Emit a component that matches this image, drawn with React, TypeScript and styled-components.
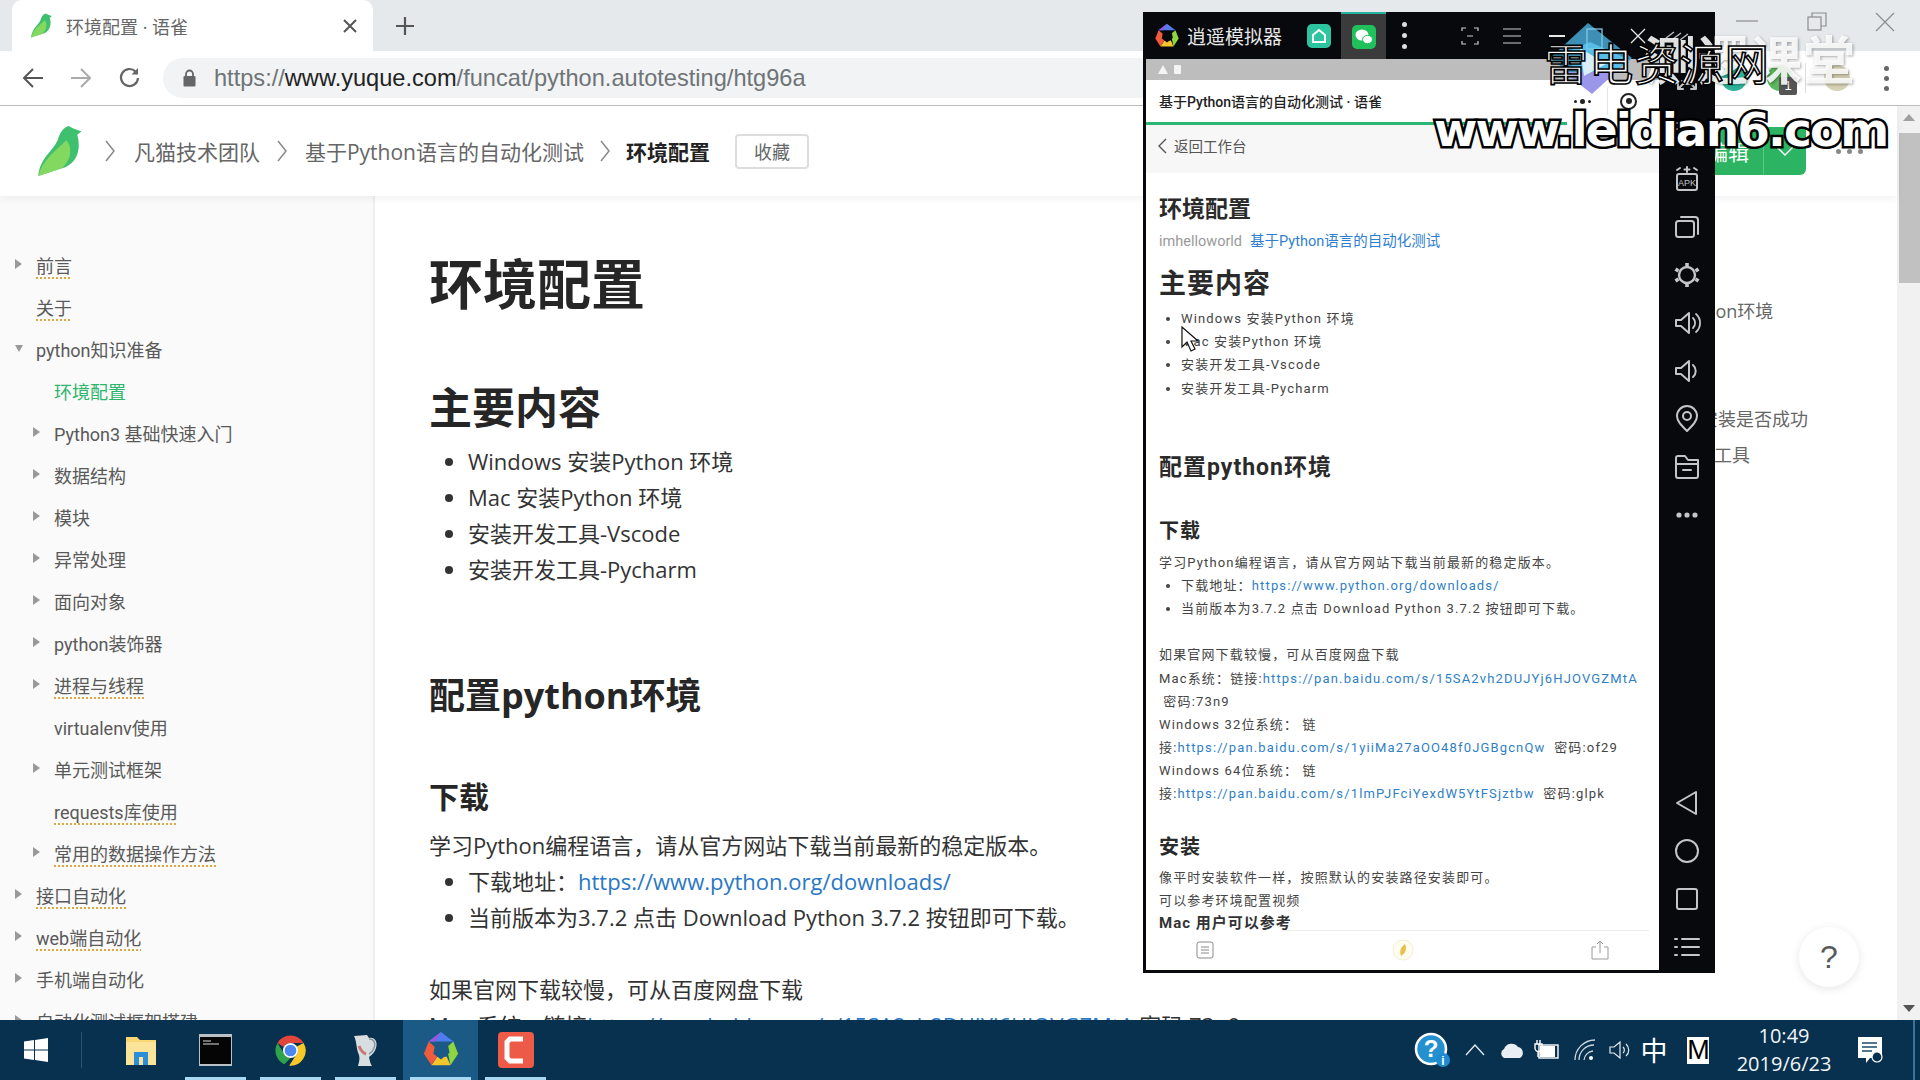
import React from "react";
import styled, { createGlobalStyle } from "styled-components";

const sans = `"Open Sans", "Noto Sans CJK SC", sans-serif`;
const navFont = `Roboto, "Noto Sans CJK SC", sans-serif`;
const phoneFont = `Roboto, "Noto Sans CJK SC", sans-serif`;

const Global = createGlobalStyle`
  html, body { margin: 0; padding: 0; width: 1920px; height: 1080px; overflow: hidden; background: #fff; }
  * { box-sizing: border-box; }
  ul { list-style: disc; }
`;

const Screen = styled.div`
  position: relative; width: 1920px; height: 1080px; overflow: hidden;
  display: flex; flex-direction: column; font-family: ${sans}; color: #333;
`;

/* ---------- browser chrome ---------- */
const TabStrip = styled.div`
  height: 51px; flex: none; background: #e6e9ec; display: flex; align-items: stretch; padding-left: 12px;
`;
const Tab = styled.div`
  width: 361px; background: #fff; border-radius: 10px 10px 0 0; display: flex; align-items: center;
  padding: 0 16px 0 18px; gap: 12px; font-size: 18px; color: #666;
`;
const TabTitle = styled.span`flex: 1; white-space: nowrap;`;
const NewTab = styled.div`
  width: 64px; display: flex; align-items: center; justify-content: center; color: #555;
`;
const WindowControls = styled.div`
  margin-left: auto; display: flex; align-items: flex-start; gap: 48px; padding: 12px 25px 0 0; color: #8a8d90;
`;
const Toolbar = styled.div`
  height: 55px; flex: none; background: #fff; border-bottom: 1px solid #bdbdbd; display: flex; align-items: center;
  padding: 0 3px 0 22px;
`;
const NavIcon = styled.div<{ $w: number }>`
  width: ${(p) => p.$w}px; flex: none; display: flex; align-items: center; color: #666;
`;
const Omnibox = styled.div`
  flex: 1; height: 40px; border-radius: 20px; background: #f1f3f4; display: flex; align-items: center;
  padding-left: 20px; gap: 18px; font-family: "Liberation Sans", sans-serif; font-size: 23.6px; color: #6f7477;
`;
const UrlHost = styled.span`color: #222;`;
const ToolbarRight = styled.div`
  flex: none; width: 230px; padding-left: 34px; display: flex; align-items: center; gap: 0;
`;
const ExtIcon = styled.div<{ $c: string }>`
  position: relative; width: 26px; height: 26px; border-radius: 50%; background: ${(p) => p.$c}; margin-right: 20px; flex: none;
`;
const ExtBadge = styled.span`
  position: absolute; left: 12px; top: 12px; width: 18px; height: 18px; background: #555; color: #fff; border-radius: 2px;
  font-size: 13px; line-height: 18px; text-align: center; font-family: "Liberation Sans", sans-serif;
`;
const ToolbarDivider = styled.div`width: 1px; height: 30px; background: #ddd; margin: 0 18px 0 -8px; flex: none;`;
const MenuDots = styled.div`
  display: flex; flex-direction: column; gap: 5px; margin-left: 14px; flex: none;
  span { width: 5px; height: 5px; border-radius: 50%; background: #666; }
`;

/* ---------- page ---------- */
const PageRow = styled.div`flex: 1; min-height: 0; display: flex; position: relative;`;
const Page = styled.div`flex: 1; min-width: 0; display: flex; flex-direction: column;`;
const PageHeader = styled.header`
  height: 90px; flex: none; display: flex; align-items: center; padding: 0 34px 0 36px; background: #fff;
  box-shadow: 0 3px 8px rgba(0, 0, 0, 0.05); position: relative; z-index: 1;
`;
const Crumb = styled.span<{ $strong?: boolean }>`
  font-size: 21px; white-space: nowrap; color: ${(p) => (p.$strong ? "#222" : "#666")}; font-weight: ${(p) => (p.$strong ? 700 : 400)};
`;
const CrumbSep = styled.div<{ $w: number }>`
  width: ${(p) => p.$w}px; flex: none; display: flex; justify-content: center; color: #888;
`;
const Collect = styled.button`
  margin-left: 25px; width: 74px; height: 35px; border: 2px solid #ddd; border-radius: 4px; background: #fff;
  font: 18px ${sans}; color: #666; padding: 0;
`;
const EditButton = styled.div`
  margin-left: auto; width: 145px; height: 48px; background: #2cb462; border-radius: 0 0 6px 0; color: #fff;
  display: flex; align-items: center; font-size: 21px; justify-content: flex-end;
`;
const EditLabel = styled.span`padding-right: 14px;`;
const EditCaret = styled.div`
  width: 43px; height: 100%; border-left: 1px solid #5cc888; display: flex; align-items: center; justify-content: center;
`;
const HeaderMore = styled.div`
  display: flex; gap: 6px; margin-left: 30px;
  span { width: 5px; height: 5px; border-radius: 50%; background: #888; }
`;
const PageBody = styled.div`flex: 1; min-height: 0; display: flex; overflow: hidden;`;
const Sidebar = styled.nav`
  width: 375px; flex: none; background: #fafafa; border-right: 2px solid #eee; padding-top: 48px; overflow: hidden; font-family: ${navFont};
`;
const NavItem = styled.div<{ $level: number }>`
  height: 42px; display: flex; align-items: center; padding-left: ${(p) => 15 + p.$level * 18}px; font-size: 18px; color: #595959; white-space: nowrap;
`;
const NavArrow = styled.span<{ $open?: boolean; $hidden?: boolean }>`
  width: 21px; flex: none; display: block; height: 0; position: relative;
  &::before {
    content: ""; position: absolute; left: 0; top: -6px; border-style: solid;
    display: ${(p) => (p.$hidden ? "none" : "block")};
    border-width: ${(p) => (p.$open ? "7px 4px 0 4px" : "5px 0 5px 7px")};
    margin-top: ${(p) => (p.$open ? "2px" : "0")};
    border-color: ${(p) => (p.$open ? "#999 transparent transparent transparent" : "transparent transparent transparent #999")};
  }
`;
const NavLabel = styled.span<{ $linked?: boolean; $active?: boolean }>`
  color: ${(p) => (p.$active ? "#2db56c" : "inherit")};
  ${(p) =>
    p.$linked
      ? "text-decoration: underline dotted #e0a83c; text-decoration-thickness: 2px; text-underline-offset: 4px; text-decoration-skip-ink: none;"
      : ""}
`;
const Article = styled.main`
  flex: 1; min-width: 0; padding: 53px 0 0 54px; color: #333; overflow: hidden; font-size: 22px;
`;
const H1 = styled.h1`margin: 0; font-size: 54px; line-height: 70px; color: #262626; font-weight: 700;`;
const H2 = styled.h2<{ $size: number; $top: number; $lh: number }>`
  margin: ${(p) => p.$top}px 0 0; font-size: ${(p) => p.$size}px; line-height: ${(p) => p.$lh}px; color: #262626; font-weight: 700; white-space: nowrap;
`;
const List = styled.ul<{ $top: number }>`
  margin: ${(p) => p.$top}px 0 0; padding: 0 0 0 39px;
`;
const Li = styled.li`line-height: 36px; white-space: nowrap;`;
const Para = styled.p<{ $top: number }>`
  margin: ${(p) => p.$top}px 0 0; line-height: 36px; white-space: nowrap;
`;
const DocLink = styled.a`color: #2a78c4; text-decoration: none;`;
const Toc = styled.aside`
  width: 255px; flex: none; padding-top: 97px; font-size: 18px; color: #666;
`;
const TocItem = styled.div<{ $indent?: boolean }>`
  height: 36px; line-height: 36px; white-space: nowrap; padding-left: ${(p) => (p.$indent ? 22 : 0)}px;
`;
const Scrollbar = styled.div`
  width: 23px; flex: none; background: #f1f1f1; display: flex; flex-direction: column; align-items: center; padding: 8px 0 8px 1px;
`;
const ScrollThumb = styled.div`width: 21px; height: 150px; background: #c1c1c1; margin-top: 12px;`;
const ScrollArrow = styled.div<{ $down?: boolean }>`
  width: 0; height: 0; border-left: 6px solid transparent; border-right: 6px solid transparent;
  ${(p) => (p.$down ? "border-top: 7px solid #555; margin-top: auto;" : "border-bottom: 7px solid #a0a0a0;")}
`;
const HelpFab = styled.div`
  position: absolute; left: 1799px; top: 821px; width: 60px; height: 60px; border-radius: 50%; background: #fff;
  box-shadow: 0 2px 10px rgba(0, 0, 0, 0.1); display: flex; align-items: center; justify-content: center;
  font: 32px "Liberation Sans", sans-serif; color: #595959;
`;

/* ---------- emulator window ---------- */
const Emulator = styled.section`
  position: absolute; left: 1143px; top: 12px; width: 572px; height: 961px; background: #07090c; display: flex; flex-direction: column; z-index: 2;
`;
const EmuTitle = styled.div`
  height: 47px; flex: none; display: flex; align-items: stretch; color: #fff; padding-left: 11px;
`;
const EmuBrand = styled.div`
  display: flex; align-items: center; gap: 7px; font-size: 19px; width: 177px; white-space: nowrap; color: #e8e8e8;
`;
const EmuAppTab = styled.div<{ $active?: boolean }>`
  width: 45px; flex: none; display: flex; align-items: center; justify-content: center; margin-left: ${(p) => (p.$active ? 0 : -35)}px;
  ${(p) => (p.$active ? "background: #3b3b3b; border-top: 2px solid #25b39e;" : "")}
`;
const EmuAppIcon = styled.div<{ $c: string; $round?: boolean }>`
  width: 24px; height: 24px; border-radius: 5px; background: ${(p) => p.$c}; display: flex; align-items: center; justify-content: center;
`;
const EmuDots = styled.div`
  display: flex; flex-direction: column; gap: 6px; align-items: center; justify-content: center; width: 36px;
  span { width: 5px; height: 5px; border-radius: 50%; background: #ddd; }
`;
const EmuControls = styled.div`
  display: flex; align-items: center; margin-left: 39px; color: #cfcfcf; gap: 21px;
`;
const EmuClose = styled.div`margin-left: 60px; display: flex; align-items: center;`;
const EmuCollapse = styled.div`margin-left: 18px; display: flex; align-items: center; color: #bbb;`;
const EmuBody = styled.div`flex: 1; min-height: 0; display: flex;`;
const Phone = styled.div`
  width: 516px; flex: none; background: #fff; border-left: 3px solid #07090c; border-bottom: 3px solid #07090c;
  display: flex; flex-direction: column; overflow: hidden; font-family: ${phoneFont};
`;
const StatusBar = styled.div`
  height: 21px; flex: none; background: #bdbdbd; display: flex; align-items: center; gap: 6px; padding-left: 12px;
`;
const StatusMark = styled.span<{ $warn?: boolean }>`
  width: 10px; height: 9px; background: #f4f4f4; flex: none;
  ${(p) => (p.$warn ? "clip-path: polygon(50% 0, 100% 100%, 0 100%);" : "width: 7px; border-radius: 1px;")}
`;
const AppBar = styled.div`
  height: 42px; flex: none; display: flex; align-items: center; padding: 0 22px 0 13px; font-size: 14px; color: #222; font-weight: 500; white-space: nowrap;
`;
const Capsule = styled.div`
  margin-left: auto; display: flex; align-items: center; height: 28px; color: #222;
`;
const CapsuleDots = styled.div`
  display: flex; gap: 3px; align-items: center; padding-right: 16px; height: 100%; border-right: 1px solid #e6e6e6;
  span { width: 3px; height: 3px; border-radius: 50%; background: #222; }
  span:nth-child(2) { width: 5px; height: 5px; }
`;
const CapsuleTarget = styled.div`
  margin-left: 12px; width: 17px; height: 17px; border: 2px solid #222; border-radius: 50%; display: flex; align-items: center; justify-content: center;
  &::after { content: ""; width: 6px; height: 6px; background: #222; border-radius: 50%; }
`;
const Progress = styled.div`height: 3px; flex: none; width: 82%; background: #2bb673;`;
const BackRow = styled.div`
  height: 48px; flex: none; background: #f7f7f7; display: flex; align-items: center; padding: 0 0 7px 12px; gap: 7px; font-size: 14.5px; color: #555;
`;
const PhoneDoc = styled.div`
  flex: 1; min-height: 0; overflow: hidden; padding: 22px 0 0 13px; font-size: 13px; color: #444; letter-spacing: 1.15px;
`;
const PhH1 = styled.div`font-size: 23px; font-weight: 700; line-height: 30px; color: #2a2a2a; letter-spacing: 0;`;
const PhMeta = styled.div`
  margin-top: 5px; font-size: 14.5px; line-height: 24px; color: #999; letter-spacing: 0; display: flex; gap: 8px; white-space: nowrap;
`;
const PhMetaLink = styled.span`color: #2f7fd1;`;
const PhH2 = styled.div<{ $size: number; $top: number; $lh: number }>`
  margin-top: ${(p) => p.$top}px; font-size: ${(p) => p.$size}px; line-height: ${(p) => p.$lh}px; font-weight: 700; color: #2a2a2a; letter-spacing: 1px; white-space: nowrap;
`;
const PhList = styled.ul<{ $top: number }>`margin: ${(p) => p.$top}px 0 0; padding: 0 0 0 22px;`;
const PhLine = styled.div`height: 23.2px; line-height: 23.2px; white-space: nowrap;`;
const PhLi = styled.li`height: 23.2px; line-height: 23.2px; white-space: nowrap;`;
const PhP = styled.div<{ $top?: number }>`
  margin-top: ${(p) => p.$top ?? 0}px; height: 23.2px; line-height: 23.2px; white-space: nowrap;
`;
const PhLink = styled.span`color: #2f7fc6;`;
const PhBold = styled.div`height: 23px; line-height: 23px; font-size: 15px; font-weight: 700; color: #333; letter-spacing: 1px; white-space: nowrap;`;
const PhoneTabBar = styled.div`
  height: 40px; flex: none; background: #fff; display: flex; align-items: center; justify-content: space-between;
  padding: 0 50px; position: relative;
  &::before { content: ""; position: absolute; top: 0; left: 135px; right: 10px; height: 1px; background: #eee; }
`;
const SideRail = styled.div`
  flex: 1; display: flex; flex-direction: column; align-items: center; padding: 0 0 2px; color: #c3c5c7;
`;
const RailIcon = styled.div`height: 48px; flex: none; display: flex; align-items: center; justify-content: center;`;
const RailSpacer = styled.div`flex: 1;`;

/* ---------- overlays ---------- */
const Cursor = styled.svg`position: absolute; left: 1181px; top: 326px; z-index: 4;`;
const BrandDiamond = styled.svg`position: absolute; left: 1550px; top: 20px; z-index: 3;`;
const FaintBrand = styled.div`
  position: absolute; left: 1644px; top: 28px; z-index: 3; font-size: 52px; line-height: 64px; font-weight: 700; letter-spacing: 1px;
  color: rgba(255, 255, 255, 0.88); text-shadow: 1px 1px 3px rgba(0, 0, 0, 0.35); white-space: nowrap;
`;
const StampCn = styled.div`
  position: absolute; left: 1544px; top: 36px; z-index: 5; font-size: 44px; line-height: 56px; white-space: nowrap;
  color: #fff; -webkit-text-stroke: 1.6px #000; letter-spacing: 1.2px;
`;
const StampUrl = styled.div`
  position: absolute; left: 1434px; top: 102px; z-index: 5; font: 700 47px/56px "DejaVu Sans", sans-serif; white-space: nowrap;
  color: #fff; -webkit-text-stroke: 5px #000; paint-order: stroke fill; letter-spacing: -1.9px;
`;

/* ---------- taskbar ---------- */
const Taskbar = styled.footer`
  height: 60px; flex: none; background: #08304f; display: flex; align-items: stretch; color: #fff; position: relative; z-index: 6;
`;
const StartArea = styled.div`
  width: 82px; flex: none; display: flex; align-items: center; padding-left: 24px; border-right: 1px solid #2a5272; margin: 12px 0 0; height: 36px;
`;
const TaskApps = styled.div`display: flex; margin-left: 21px;`;
const TaskButton = styled.div<{ $active?: boolean; $running?: boolean }>`
  position: relative; width: 75px; display: flex; align-items: center; justify-content: center;
  background: ${(p) => (p.$active ? "#1a5a85" : "transparent")};
  &::after {
    content: ""; position: absolute; left: 7px; right: 7px; bottom: 0; height: 3px;
    background: ${(p) => (p.$running ? "#a9d9f2" : "transparent")};
  }
`;
const Tray = styled.div`margin: 0 5px 0 auto; display: flex; align-items: center; padding-right: 17px; border-right: 2px solid #3d7399;`;
const TraySlot = styled.div<{ $w: number }>`
  width: ${(p) => p.$w}px; flex: none; display: flex; align-items: center; justify-content: center;
`;
const ImeText = styled.span`font-size: 27px; line-height: 1; font-weight: 400;`;
const ImeBox = styled.span`
  width: 22px; height: 27px; background: #fff; color: #000; font: 27px/27px "Liberation Sans", sans-serif; display: block; text-align: center; overflow: hidden; letter-spacing: -1px;
`;
const Clock = styled.div`
  width: 118px; flex: none; text-align: center; font: 20px/28px "Open Sans", sans-serif; color: #f2f6f9; white-space: nowrap;
`;

/* ---------- drawings ---------- */
const Bird = ({ s }: { s: number }) => (
  <svg width={s * 0.96} height={s} viewBox="0 0 46 48">
    <path d="M30 1 L34 3 L42 6 L38 9 C42 22 38 36 24 40 L2 47 C4 30 14 26 20 14 C22 8 24 3 30 1Z" fill="#3fc06f" />
    <path d="M28 14 C33 20 34 30 24 40 L2 47 C6 32 18 24 28 14Z" fill="#8fdc5e" opacity="0.85" />
  </svg>
);
const Nox = ({ s, center = "#08304f" }: { s: number; center?: string }) => (
  <svg width={s} height={s} viewBox="0 0 40 40">
    <polygon points="20,1 33,11 14,11 7,11" fill="#4f7cf0" />
    <polygon points="20,1 7,11 14,11" fill="#9a55e0" />
    <polygon points="33,11 38,24 30,36 26,17" fill="#8ed63f" />
    <polygon points="30,36 10,36 16,27 26,27" fill="#f5c52d" />
    <polygon points="10,36 2,24 7,11 14,17 16,27" fill="#ef5b3c" />
    <polygon points="14,13 27,13 29,23 20,30 12,24" fill={center} />
  </svg>
);
const Chevron = ({ h = 22, w = 10 }: { h?: number; w?: number }) => (
  <svg width={w} height={h} viewBox="0 0 10 22" fill="none" stroke="currentColor" strokeWidth="1.5"><path d="M1 1 L9 11 L1 21" /></svg>
);

const navItems: { t: string; l: number; arrow?: boolean; open?: boolean; link?: boolean; active?: boolean }[] = [
  { t: "前言", l: 0, arrow: true, link: true },
  { t: "关于", l: 0, link: true },
  { t: "python知识准备", l: 0, arrow: true, open: true },
  { t: "环境配置", l: 1, active: true },
  { t: "Python3 基础快速入门", l: 1, arrow: true },
  { t: "数据结构", l: 1, arrow: true },
  { t: "模块", l: 1, arrow: true },
  { t: "异常处理", l: 1, arrow: true },
  { t: "面向对象", l: 1, arrow: true },
  { t: "python装饰器", l: 1, arrow: true },
  { t: "进程与线程", l: 1, arrow: true, link: true },
  { t: "virtualenv使用", l: 1 },
  { t: "单元测试框架", l: 1, arrow: true },
  { t: "requests库使用", l: 1, link: true },
  { t: "常用的数据操作方法", l: 1, arrow: true, link: true },
  { t: "接口自动化", l: 0, arrow: true, link: true },
  { t: "web端自动化", l: 0, arrow: true, link: true },
  { t: "手机端自动化", l: 0, arrow: true },
  { t: "自动化测试框架搭建", l: 0, arrow: true },
];

const rail = (d: React.ReactNode) => (
  <RailIcon>
    <svg width="28" height="28" viewBox="0 0 28 28" fill="none" stroke="currentColor" strokeWidth="2" strokeLinejoin="round" strokeLinecap="round">{d}</svg>
  </RailIcon>
);

export default function App() {
  return (
    <Screen>
      <Global />
      <TabStrip>
        <Tab>
          <Bird s={25} />
          <TabTitle>环境配置 · 语雀</TabTitle>
          <svg width="14" height="14" viewBox="0 0 14 14" stroke="#555" strokeWidth="2"><path d="M1 1 L13 13 M13 1 L1 13" /></svg>
        </Tab>
        <NewTab>
          <svg width="20" height="20" viewBox="0 0 20 20" stroke="currentColor" strokeWidth="2.2"><path d="M10 1 V19 M1 10 H19" /></svg>
        </NewTab>
        <WindowControls>
          <svg width="24" height="20" viewBox="0 0 24 20" stroke="currentColor" strokeWidth="1.2"><path d="M1 9 H23" /></svg>
          <svg width="20" height="20" viewBox="0 0 20 20" fill="none" stroke="currentColor" strokeWidth="1.2"><rect x="1" y="5" width="13" height="13" /><path d="M5 5 V1 H19 V14 H14" /></svg>
          <svg width="20" height="20" viewBox="0 0 20 20" stroke="currentColor" strokeWidth="1.2"><path d="M1 1 L19 19 M19 1 L1 19" /></svg>
        </WindowControls>
      </TabStrip>
      <Toolbar>
        <NavIcon $w={48}>
          <svg width="22" height="22" viewBox="0 0 22 22" fill="none" stroke="#555" strokeWidth="2"><path d="M21 11 H3 M11 2 L2 11 L11 20" /></svg>
        </NavIcon>
        <NavIcon $w={48}>
          <svg width="22" height="22" viewBox="0 0 22 22" fill="none" stroke="#aaa" strokeWidth="2"><path d="M1 11 H19 M11 2 L20 11 L11 20" /></svg>
        </NavIcon>
        <NavIcon $w={45}>
          <svg width="24" height="24" viewBox="0 0 24 24" fill="none" stroke="#666" strokeWidth="2.2"><path d="M20 12 A8.5 8.5 0 1 1 17.5 5.5" /><path d="M20 2 V8.5 H13.5 Z" fill="#666" stroke="none" /></svg>
        </NavIcon>
        <Omnibox>
          <svg width="13" height="18" viewBox="0 0 13 18"><path d="M3 8 V5 A3.5 3.5 0 0 1 10 5 V8" fill="none" stroke="#666" strokeWidth="1.8" /><rect x="0.5" y="7" width="12" height="10.5" rx="1" fill="#666" /></svg>
          <span>https://<UrlHost>www.yuque.com</UrlHost>/funcat/python.autotesting/htg96a</span>
        </Omnibox>
        <ToolbarRight>
          <ExtIcon $c="#2eb39a" />
          <ExtIcon $c="#5cb85c"><ExtBadge>1</ExtBadge></ExtIcon>
          <ToolbarDivider />
          <ExtIcon $c="#d6d2b4" />
          <MenuDots><span /><span /><span /></MenuDots>
        </ToolbarRight>
      </Toolbar>

      <PageRow>
        <Page>
          <PageHeader>
            <Bird s={52} />
            <CrumbSep $w={48}><Chevron /></CrumbSep>
            <Crumb>凡猫技术团队</Crumb>
            <CrumbSep $w={45}><Chevron /></CrumbSep>
            <Crumb>基于Python语言的自动化测试</Crumb>
            <CrumbSep $w={42}><Chevron /></CrumbSep>
            <Crumb $strong>环境配置</Crumb>
            <Collect>收藏</Collect>
            <EditButton>
              <EditLabel>编辑</EditLabel>
              <EditCaret>
                <svg width="18" height="10" viewBox="0 0 18 10" fill="none" stroke="#fff" strokeWidth="1.4"><path d="M1 1 L9 9 L17 1" /></svg>
              </EditCaret>
            </EditButton>
            <HeaderMore><span /><span /><span /></HeaderMore>
          </PageHeader>
          <PageBody>
            <Sidebar>
              {navItems.map((n) => (
                <NavItem key={n.t} $level={n.l}>
                  <NavArrow $open={n.open} $hidden={!n.arrow} />
                  <NavLabel $linked={n.link} $active={n.active}>{n.t}</NavLabel>
                </NavItem>
              ))}
            </Sidebar>
            <Article>
              <H1>环境配置</H1>
              <H2 $size={43} $top={59} $lh={60}>主要内容</H2>
              <List $top={5}>
                <Li>Windows 安装Python 环境</Li>
                <Li>Mac 安装Python 环境</Li>
                <Li>安装开发工具-Vscode</Li>
                <Li>安装开发工具-Pycharm</Li>
              </List>
              <H2 $size={36} $top={84} $lh={50}>配置python环境</H2>
              <H2 $size={30} $top={56} $lh={40}>下载</H2>
              <Para $top={10}>学习Python编程语言，请从官方网站下载当前最新的稳定版本。</Para>
              <List $top={0}>
                <Li>下载地址：<DocLink>https://www.python.org/downloads/</DocLink></Li>
                <Li>当前版本为3.7.2 点击 Download Python 3.7.2 按钮即可下载。</Li>
              </List>
              <Para $top={36}>如果官网下载较慢，可从百度网盘下载</Para>
              <Para $top={0}>Mac 系统：链接<DocLink>https://pan.baidu.com/s/15SA2vh2DUJYj6HJOVGZMtA</DocLink> 密码:73n9</Para>
            </Article>
            <Toc>
              <TocItem>配置python环境</TocItem>
              <TocItem $indent>下载</TocItem>
              <TocItem $indent>安装</TocItem>
              <TocItem $indent>验证安装是否成功</TocItem>
              <TocItem>安装开发工具</TocItem>
            </Toc>
          </PageBody>
        </Page>
        <Scrollbar>
          <ScrollArrow />
          <ScrollThumb />
          <ScrollArrow $down />
        </Scrollbar>
        <HelpFab>?</HelpFab>
      </PageRow>

      <Taskbar>
        <StartArea>
          <svg width="24" height="24" viewBox="0 0 24 24" fill="#fff"><polygon points="0,3.5 10,2 10,11.4 0,11.4" /><polygon points="11,1.9 24,0 24,11.4 11,11.4" /><polygon points="0,12.6 10,12.6 10,22 0,20.5" /><polygon points="11,12.6 24,12.6 24,24 11,22.1" /></svg>
        </StartArea>
        <TaskApps>
          <TaskButton>
            <svg width="32" height="32" viewBox="0 0 32 32"><path d="M1 3 H12 L15 6 H31 V31 H1Z" fill="#f7d774" /><path d="M1 8 H31 V31 H1Z" fill="#fbe49a" /><path d="M9 31 V18 H23 V31 H18 V23 H14 V31Z" fill="#2a8fd8" /></svg>
          </TaskButton>
          <TaskButton $running>
            <svg width="33" height="32" viewBox="0 0 33 32"><rect width="33" height="32" fill="#b9c0c6" /><rect x="1" y="3" width="31" height="27" fill="#050505" /><path d="M4 7 H12 M4 10 H20" stroke="#ddd" strokeWidth="1.2" /></svg>
          </TaskButton>
          <TaskButton $running>
            <svg width="33" height="33" viewBox="0 0 48 48"><path d="M24 2 A22 22 0 0 1 43 13 H24 A11 11 0 0 0 14 19 L5 13 A22 22 0 0 1 24 2Z" fill="#e0463a" /><path d="M5 13 L15 29 A11 11 0 0 0 24 35 L15 44 A22 22 0 0 1 5 13Z" fill="#2fa24d" /><path d="M43 13 A22 22 0 0 1 22 46 L33 29 A11 11 0 0 0 33 18Z" fill="#f9c927" /><circle cx="24" cy="24" r="11" fill="#fff" /><circle cx="24" cy="24" r="8.5" fill="#4a88ee" /></svg>
          </TaskButton>
          <TaskButton $running>
            <svg width="33" height="33" viewBox="0 0 33 33"><path d="M5 2 L18 1 L20 4 C26 3 29 8 27 14 C26 18 23 21 20 23 C21 27 21 29 23 32 H9 C10 28 11 26 10 21 C7 15 8 8 5 2Z" fill="#d8dde0" /><path d="M20 5 C25 5 27 9 25 14 C24 17 22 19 20 20" fill="none" stroke="#8a9aa4" strokeWidth="1.5" /><path d="M10 12 C12 17 14 19 17 20" stroke="#c77" strokeWidth="3" fill="none" /></svg>
          </TaskButton>
          <TaskButton $active $running>
            <Nox s={38} center="#1a5a85" />
          </TaskButton>
          <TaskButton $running>
            <svg width="36" height="36" viewBox="0 0 36 36"><rect width="36" height="36" rx="4" fill="#ee5a48" /><path d="M25 7 H12 L9 10 V26 L12 29 H25" fill="none" stroke="#fff" strokeWidth="5" /></svg>
          </TaskButton>
        </TaskApps>
        <Tray>
          <TraySlot $w={40}>
            <svg width="36" height="36" viewBox="0 0 36 36"><circle cx="17" cy="17" r="15" fill="#2590d0" stroke="#fff" strokeWidth="2.5" /><text x="17" y="25" fontSize="24" fontWeight="700" fill="#fff" textAnchor="middle" fontFamily="Liberation Sans">?</text><circle cx="29" cy="28" r="7" fill="#1f8bd3" /><text x="29" y="33" fontSize="12" fontWeight="700" fill="#fff" textAnchor="middle" fontFamily="Liberation Sans">i</text></svg>
          </TraySlot>
          <TraySlot $w={45}>
            <svg width="20" height="12" viewBox="0 0 20 12" fill="none" stroke="#dfe8ee" strokeWidth="1.4"><path d="M1 11 L10 1 L19 11" /></svg>
          </TraySlot>
          <TraySlot $w={30}>
            <svg width="26" height="18" viewBox="0 0 26 18"><path d="M5 17 A5 5 0 0 1 5 8 A8 8 0 0 1 19 6 A6 6 0 0 1 21 17Z" fill="#e9eef2" /></svg>
          </TraySlot>
          <TraySlot $w={40}>
            <svg width="26" height="20" viewBox="0 0 26 20" fill="none" stroke="#fff" strokeWidth="1.4"><rect x="5" y="5" width="19" height="13" /><rect x="6" y="6" width="15" height="11" fill="#fff" stroke="none" /><path d="M3 0 V4 M6 0 V4 M1 4 H8 V8 A3 3 0 0 1 1 8Z M4 11 V17" /></svg>
          </TraySlot>
          <TraySlot $w={36}>
            <svg width="22" height="22" viewBox="0 0 22 22" fill="none" stroke="#cdd8e0" strokeWidth="1.3"><path d="M1 21 A20 20 0 0 1 21 1 M5 21 A15 15 0 0 1 20 6 M10 21 A10 10 0 0 1 19 12" /><circle cx="17" cy="19" r="2" fill="#fff" stroke="none" /></svg>
          </TraySlot>
          <TraySlot $w={34}>
            <svg width="22" height="20" viewBox="0 0 22 20" fill="none" stroke="#e6edf2" strokeWidth="1.2"><path d="M1 7 H5 L11 2 V18 L5 13 H1Z" /><path d="M14 7 A4 4 0 0 1 14 13 M17 4 A8 8 0 0 1 17 16" /></svg>
          </TraySlot>
          <TraySlot $w={34}><ImeText>中</ImeText></TraySlot>
          <TraySlot $w={54}><ImeBox>M</ImeBox></TraySlot>
          <Clock>10:49<br />2019/6/23</Clock>
          <TraySlot $w={53}>
            <svg width="26" height="28" viewBox="0 0 26 28"><path d="M1 1 H25 V22 H13 L9 27 V22 H1Z" fill="#fff" /><path d="M5 7 H20 M5 11 H20 M5 15 H15" stroke="#1d4a6b" strokeWidth="1.4" /><circle cx="20" cy="21" r="5" fill="#08304f" stroke="#fff" strokeWidth="1.2" /></svg>
          </TraySlot>
        </Tray>
      </Taskbar>

      <Emulator>
        <EmuTitle>
          <EmuBrand><Nox s={26} center="#07090c" />逍遥模拟器</EmuBrand>
          <EmuAppTab>
            <EmuAppIcon $c="#2cc5a0">
              <svg width="14" height="14" viewBox="0 0 14 14" fill="none" stroke="#fff" strokeWidth="2"><path d="M7 1 L13 6 V13 H1 V6Z" /></svg>
            </EmuAppIcon>
          </EmuAppTab>
          <EmuAppTab $active>
            <EmuAppIcon $c="#20c05c">
              <svg width="18" height="16" viewBox="0 0 18 16" fill="#fff"><ellipse cx="7" cy="6" rx="6.5" ry="5.5" /><ellipse cx="12.5" cy="10.5" rx="5" ry="4.2" stroke="#20c05c" /></svg>
            </EmuAppIcon>
          </EmuAppTab>
          <EmuDots><span /><span /><span /></EmuDots>
          <EmuControls>
            <svg width="18" height="20" viewBox="0 0 18 20" fill="none" stroke="currentColor" strokeWidth="1.2"><path d="M1 5 V2 H5 M13 2 H17 V5 M1 15 V18 H5 M13 18 H17 V15 M6 10 H12" /></svg>
            <svg width="24" height="20" viewBox="0 0 24 20" stroke="currentColor" strokeWidth="1.2"><path d="M3 3 H21 M3 10 H21 M3 17 H21" /></svg>
            <svg width="24" height="20" viewBox="0 0 24 20" stroke="#e8e8e8" strokeWidth="2"><path d="M4 10 H20" /></svg>
          </EmuControls>
          <EmuClose>
            <svg width="18" height="18" viewBox="0 0 18 18" stroke="#e8e8e8" strokeWidth="1.3"><path d="M2 2 L16 16 M16 2 L2 16" /></svg>
          </EmuClose>
          <EmuCollapse>
            <svg width="24" height="14" viewBox="0 0 24 14" fill="none" stroke="currentColor" strokeWidth="1.5"><path d="M1 9 L9 3 M8 10 L16 4 M15 11 L23 5" /></svg>
          </EmuCollapse>
        </EmuTitle>
        <EmuBody>
          <Phone>
            <StatusBar><StatusMark $warn /><StatusMark /></StatusBar>
            <AppBar>
              基于Python语言的自动化测试 · 语雀
              <Capsule>
                <CapsuleDots><span /><span /><span /></CapsuleDots>
                <CapsuleTarget />
              </Capsule>
            </AppBar>
            <Progress />
            <BackRow>
              <svg width="9" height="16" viewBox="0 0 9 16" fill="none" stroke="#555" strokeWidth="1.4"><path d="M8 1 L1 8 L8 15" /></svg>
              返回工作台
            </BackRow>
            <PhoneDoc>
              <PhH1>环境配置</PhH1>
              <PhMeta>imhelloworld<PhMetaLink>基于Python语言的自动化测试</PhMetaLink></PhMeta>
              <PhH2 $size={27} $top={10} $lh={40}>主要内容</PhH2>
              <PhList $top={3}>
                <PhLi>Windows 安装Python 环境</PhLi>
                <PhLi>Mac 安装Python 环境</PhLi>
                <PhLi>安装开发工具-Vscode</PhLi>
                <PhLi>安装开发工具-Pycharm</PhLi>
              </PhList>
              <PhH2 $size={23} $top={53} $lh={30}>配置python环境</PhH2>
              <PhH2 $size={20} $top={33} $lh={30}>下载</PhH2>
              <PhP $top={5}>学习Python编程语言，请从官方网站下载当前最新的稳定版本。</PhP>
              <PhList $top={0}>
                <PhLi>下载地址：<PhLink>https://www.python.org/downloads/</PhLink></PhLi>
                <PhLi>当前版本为3.7.2 点击 Download Python 3.7.2 按钮即可下载。</PhLi>
              </PhList>
              <PhP $top={23}>如果官网下载较慢，可从百度网盘下载</PhP>
              <PhLine>Mac系统：链接:<PhLink>https://pan.baidu.com/s/15SA2vh2DUJYj6HJOVGZMtA</PhLink></PhLine>
              <PhLine>&nbsp;密码:73n9</PhLine>
              <PhLine>Windows 32位系统： 链</PhLine>
              <PhLine>接:<PhLink>https://pan.baidu.com/s/1yiiMa27aOO48f0JGBgcnQw</PhLink>&nbsp; 密码:of29</PhLine>
              <PhLine>Windows 64位系统： 链</PhLine>
              <PhLine>接:<PhLink>https://pan.baidu.com/s/1lmPJFciYexdW5YtFSjztbw</PhLink>&nbsp; 密码:glpk</PhLine>
              <PhH2 $size={20} $top={26} $lh={30}>安装</PhH2>
              <PhP $top={4}>像平时安装软件一样，按照默认的安装路径安装即可。</PhP>
              <PhP>可以参考环境配置视频</PhP>
              <PhBold>Mac 用户可以参考</PhBold>
            </PhoneDoc>
            <PhoneTabBar>
              <svg width="18" height="18" viewBox="0 0 18 18" fill="none" stroke="#8a8a8a" strokeWidth="1"><rect x="1" y="1" width="16" height="16" rx="2" /><path d="M5 6 H13 M5 9 H13 M5 12 H13" /></svg>
              <svg width="22" height="22" viewBox="0 0 22 22"><circle cx="11" cy="11" r="10" fill="#fffdf0" stroke="#f3edd0" /><path d="M9 17 C7 12 9 8 13 5 C15 9 14 14 9 17Z" fill="#e8c04a" /></svg>
              <svg width="18" height="20" viewBox="0 0 18 20" fill="none" stroke="#9a9a9a" strokeWidth="1"><path d="M5 7 H1 V19 H17 V7 H13 M9 13 V1 M6 4 L9 1 L12 4" /></svg>
            </PhoneTabBar>
          </Phone>
          <SideRail>
            {rail(<><path d="M5 20 L11 14 M5 20 V15 M5 20 H10 M23 20 L17 14 M23 20 V15 M23 20 H18" /></>)}
            {rail(<><path d="M4 6 H24 M4 12 H24 M4 18 H24" /></>)}
            {rail(<><rect x="4" y="9" width="20" height="16" rx="2" /><path d="M14 2 V7 M11.5 4.5 H16.5 M4 5 L7 3 M24 5 L21 3" /><text x="14" y="21" fontSize="9" textAnchor="middle" fill="currentColor" stroke="none" fontFamily="Liberation Sans">APK</text></>)}
            {rail(<><rect x="3" y="8" width="18" height="16" rx="2.5" /><path d="M8 4 H22 A3 3 0 0 1 25 7 V21" /></>)}
            {rail(<><circle cx="14" cy="14" r="8" strokeWidth="2.4" /><path d="M14 2 V5 M14 23 V26 M2.5 8 L5.5 10 M22.5 18 L25.5 20 M2.5 20 L5.5 18 M22.5 10 L25.5 8" strokeWidth="3.6" strokeLinecap="butt" /></>)}
            {rail(<><path d="M3 11 H8 L16 4 V24 L8 17 H3Z" /><path d="M20 9 A7 7 0 0 1 20 19 M23 5 A12 12 0 0 1 23 23" strokeWidth="1.8" /></>)}
            {rail(<><path d="M3 11 H8 L16 4 V24 L8 17 H3Z" /><path d="M20 8 A8 8 0 0 1 20 20" /></>)}
            {rail(<><path d="M14 26 C8 20 4 16 4 11 A10 10 0 0 1 24 11 C24 16 20 20 14 26Z" /><circle cx="14" cy="11" r="4" /></>)}
            {rail(<><path d="M3 22 V5 A2 2 0 0 1 5 3 H12 L15 7 H25 V23 A2 2 0 0 1 23 25 H5 A2 2 0 0 1 3 23Z M3 11 H25 M10 17 H18" /></>)}
            {rail(<><circle cx="6" cy="14" r="1.6" fill="currentColor" /><circle cx="14" cy="14" r="1.6" fill="currentColor" /><circle cx="22" cy="14" r="1.6" fill="currentColor" /></>)}
            <RailSpacer />
            {rail(<path d="M4 14 L23 3 V25Z" />)}
            {rail(<circle cx="14" cy="14" r="11" />)}
            {rail(<rect x="4" y="4" width="20" height="20" rx="2" />)}
            {rail(<><path d="M9 6 H26 M9 14 H26 M9 22 H26" /><path d="M2 6 H4 M2 14 H4 M2 22 H4" /></>)}
          </SideRail>
        </EmuBody>
      </Emulator>

      <Cursor width="20" height="28" viewBox="0 0 20 28">
        <path d="M1 1 V21 L6 16 L10 25 L14 23 L10 15 L17 15Z" fill="#fff" stroke="#111" strokeWidth="1.2" />
      </Cursor>
      <BrandDiamond width="90" height="78" viewBox="0 0 90 78">
        <polygon points="38,3 82,38 42,70 0,38" fill="#3d8fb5" />
        <polygon points="12,34 40,22 80,40 42,68" fill="#58bde6" />
        <polygon points="14,52 66,52 42,74" fill="#9a96ea" />
        <path d="M30 28 L56 44 L34 56Z" fill="#d8eef8" />
        <rect x="37" y="9" width="15" height="20" fill="none" stroke="#7fcbe8" strokeWidth="1.3" />
      </BrandDiamond>
      <FaintBrand>测逻课堂</FaintBrand>
      <StampCn>雷电资源网</StampCn>
      <StampUrl>www.leidian6.com</StampUrl>
    </Screen>
  );
}
